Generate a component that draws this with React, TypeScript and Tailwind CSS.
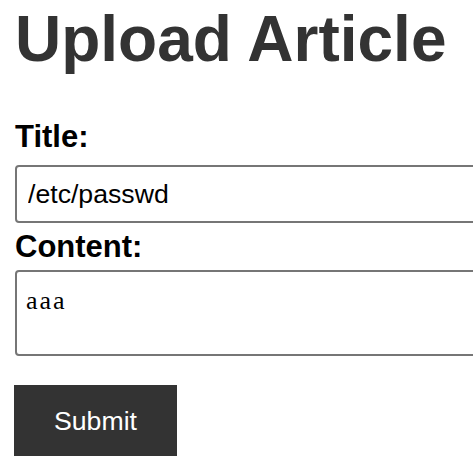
import React, { useState } from "react";

export default function App() {
  const [title, setTitle] = useState("/etc/passwd");
  const [content, setContent] = useState("aaa");

  return (
    <div className="min-h-screen w-full overflow-hidden bg-white pl-[15px] font-['Liberation_Sans',Arial,sans-serif]">
      <h1 className="mt-[1px] whitespace-nowrap text-[64px] font-bold leading-[76px] text-[#333333]">
        Upload Article
      </h1>

      <form onSubmit={(e) => e.preventDefault()} className="flex flex-col items-start">
        <label
          htmlFor="title"
          className="mt-[43px] block text-[31px] font-bold leading-[33px] text-black"
        >
          Title:
        </label>
        <input
          id="title"
          type="text"
          value={title}
          onChange={(e) => setTitle(e.target.value)}
          className="mt-[12px] h-[58px] w-[560px] shrink-0 rounded-[4px] border-2 border-[#767676] bg-white px-[11px] text-[26.67px] text-black outline-none"
        />

        <label
          htmlFor="content"
          className="mt-[7px] block text-[31px] font-bold leading-[33px] text-black"
        >
          Content:
        </label>
        <textarea
          id="content"
          value={content}
          onChange={(e) => setContent(e.target.value)}
          className="mt-[7px] h-[86px] w-[560px] shrink-0 resize-none rounded-[4px] border-2 border-[#767676] bg-white px-[9px] pt-[13px] font-['Liberation_Serif','Times_New_Roman',serif] text-[26px] leading-[32px] tracking-[2px] text-black outline-none"
        />

        <button
          type="submit"
          className="-ml-px mt-[29px] h-[71px] w-[163px] bg-[#333333] text-[26.67px] text-white"
        >
          Submit
        </button>
      </form>
    </div>
  );
}
